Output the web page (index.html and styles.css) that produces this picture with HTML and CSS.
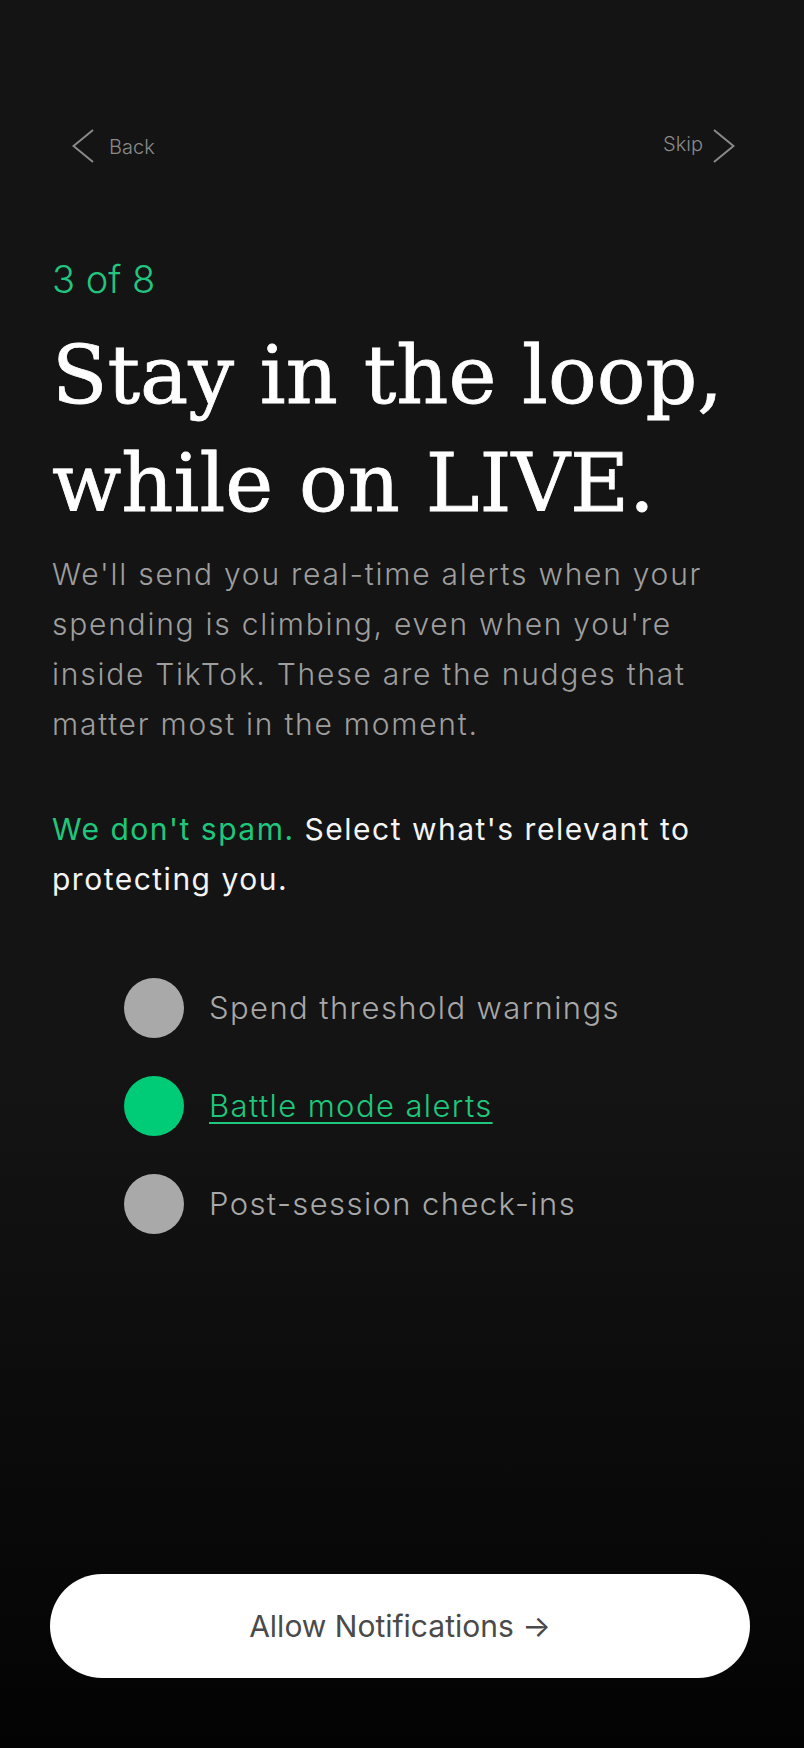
FILE: index.html
```html
<!DOCTYPE html>
<html lang="en">
<head>
<meta charset="utf-8">
<title>Stay in the loop</title>
<link rel="stylesheet" href="styles.css">
</head>
<body>
<main class="screen">
  <nav class="nav">
    <a class="nav-link back" href="#">
      <svg class="chev" width="22" height="34" viewBox="0 0 22 34" aria-hidden="true"><polyline points="21,1 1.5,17 21,33" fill="none" stroke="#8a8a8a" stroke-width="2"/></svg>
      <span>Back</span>
    </a>
    <a class="nav-link skip" href="#">
      <span>Skip</span>
      <svg class="chev" width="22" height="34" viewBox="0 0 22 34" aria-hidden="true"><polyline points="1,1 20.5,17 1,33" fill="none" stroke="#8a8a8a" stroke-width="2"/></svg>
    </a>
  </nav>

  <p class="step">3 of 8</p>
  <h1 class="title">Stay in the loop,<br>while on LIVE.</h1>
  <p class="lead">We'll send you real-time alerts when your spending is climbing, even when you're inside TikTok. These are the nudges that matter most in the moment.</p>
  <p class="note"><span class="accent">We don't spam.</span> Select what's relevant to protecting you.</p>

  <ul class="options">
    <li class="option"><span class="dot"></span><span class="label">Spend threshold warnings</span></li>
    <li class="option selected"><span class="dot"></span><span class="label">Battle mode alerts</span></li>
    <li class="option"><span class="dot"></span><span class="label">Post-session check-ins</span></li>
  </ul>

  <div class="footer">
    <button class="cta" type="button">Allow Notifications →</button>
  </div>
</main>
</body>
</html>
```
FILE: styles.css
```css
html, body {
  margin: 0;
  padding: 0;
}
body {
  background: linear-gradient(to bottom, #141414 0%, #141414 62%, #030303 100%);
  font-family: Inter, "Noto Sans", sans-serif;
  color: #9c9c9c;
  min-height: 1748px;
}
.screen {
  box-sizing: border-box;
  min-height: 1748px;
  padding: 129px 52px 70px 52px;
  display: flex;
  flex-direction: column;
}
.nav {
  display: flex;
  justify-content: space-between;
  align-items: center;
  height: 34px;
  margin: 0 17px 0 20px;
}
.nav-link {
  display: flex;
  align-items: center;
  color: #8a8a8a;
  text-decoration: none;
  font-size: 20px;
  font-weight: 300;
}
.back { gap: 15px; }
.back span { padding-top: 2px; }
.skip { gap: 10px; }
.skip span { padding-bottom: 4px; }
.chev { display: block; }

.step {
  margin: 94px 0 0 0;
  font-size: 38px;
  line-height: 1.2;
  font-weight: 300;
  color: #22c47f;
}
.title {
  margin: 18px 0 0 0;
  font-family: "DejaVu Serif", serif;
  font-weight: 400;
  font-size: 81px;
  line-height: 108px;
  color: #ffffff;
  -webkit-text-stroke: 0.8px #ffffff;
}
.lead {
  margin: 12px 0 0 0;
  font-size: 30px;
  line-height: 50px;
  font-weight: 300;
  letter-spacing: 1.75px;
  color: #9e9e9e;
}
.note {
  margin: 55px 0 0 0;
  font-size: 30px;
  line-height: 50px;
  font-weight: 400;
  letter-spacing: 1.5px;
  color: #f4f4f4;
}
.accent { color: #1fc77c; }

.options {
  list-style: none;
  margin: 74px 0 0 0;
  padding: 0 0 0 72px;
  display: flex;
  flex-direction: column;
  gap: 38px;
}
.option {
  display: flex;
  align-items: center;
  gap: 25px;
  height: 60px;
}
.dot {
  width: 60px;
  height: 60px;
  border-radius: 50%;
  background: #a9a9a9;
  flex: none;
}
.label {
  font-size: 31px;
  font-weight: 300;
  letter-spacing: 1.4px;
  color: #a8a8a8;
}
.selected .dot { background: #00cc77; }
.selected .label {
  color: #1fc77c;
  text-decoration: underline;
  text-decoration-thickness: 2px;
  text-underline-offset: 5px;
}

.footer {
  margin-top: auto;
}
.cta {
  display: block;
  width: 700px;
  height: 104px;
  margin-left: -2px;
  border: 0;
  border-radius: 52px;
  background: #ffffff;
  color: #4a4a4a;
  font-family: Inter, "Noto Sans", sans-serif;
  font-size: 30px;
  font-weight: 400;
  cursor: pointer;
}
```
